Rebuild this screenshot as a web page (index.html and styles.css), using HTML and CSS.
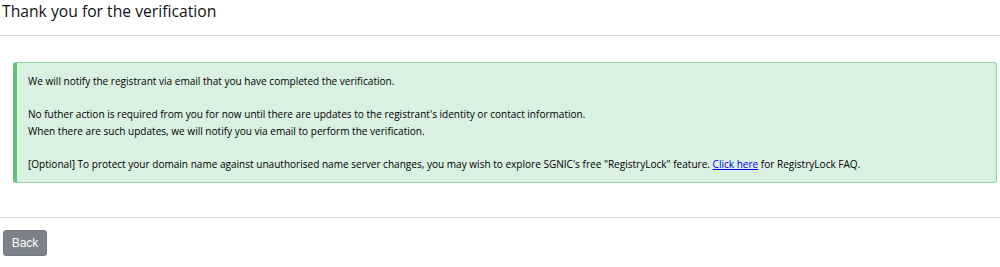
FILE: index.html
```html
<!DOCTYPE html>
<html>
<head>
<meta charset="utf-8">
<link rel="stylesheet" href="styles.css">
</head>
<body>
<div class="page">
  <h1 class="title">Thank you for the verification</h1>
  <hr class="rule">
  <div class="alert">
    We will notify the registrant via email that you have completed the verification.<br><br>
    No futher action is required from you for now until there are updates to the registrant's identity or contact information.<br>
    When there are such updates, we will notify you via email to perform the verification.<br><br>
    [Optional] To protect your domain name against unauthorised name server changes, you may wish to explore SGNIC's free "RegistryLock" feature. <a href="#" class="link">Click here</a> for RegistryLock FAQ.
  </div>
  <hr class="rule rule-bottom">
  <button class="btn">Back</button>
</div>
</body>
</html>
```
FILE: styles.css
```css
html, body {
  margin: 0;
  padding: 0;
  background: #fff;
}
.page {
  font-family: "Open Sans", sans-serif;
  color: #212529;
}
.title {
  font-size: 15.7px;
  font-weight: 400;
  margin: 0;
  padding: 0 0 0 2px;
  line-height: 22px;
  height: 35px;
  color: #111;
}
.rule {
  border: 0;
  border-top: 1px solid #dcdcdc;
  margin: 0;
}
.alert {
  margin: 26px 3px 0 13px;
  background: #daf0e1;
  border: 1px solid #8fd5a0;
  border-left: 4px solid #5cc574;
  border-radius: 3px;
  padding: 10px 11px;
  font-size: 10.05px;
  line-height: 16.5px;
  color: #000;
}
.link {
  color: #0000ee;
}
.rule-bottom {
  margin-top: 34px;
}
.btn {
  margin: 12px 0 0 3px;
  width: 44px;
  height: 26px;
  background: #7b828a;
  border: 1px solid #737a82;
  border-radius: 3px;
  color: #fff;
  font-family: "Liberation Sans", Arial, sans-serif;
  font-size: 12px;
  padding: 0;
}
```
